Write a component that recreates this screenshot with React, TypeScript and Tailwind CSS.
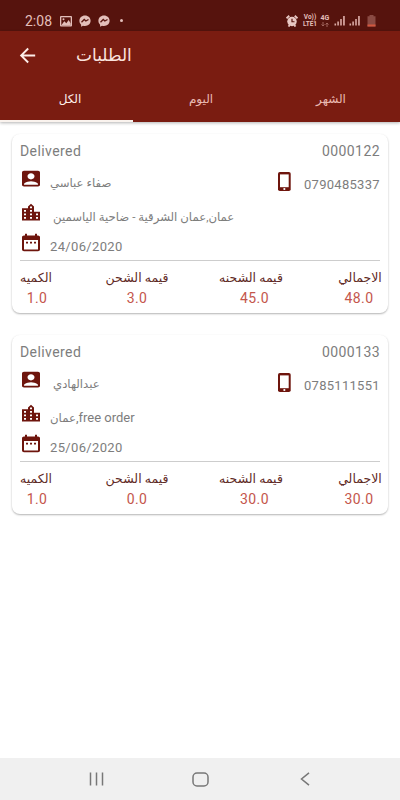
import { MdAccountBox, MdLocationCity, MdDateRange, MdArrowBack } from 'react-icons/md';

interface Order {
  id: string;
  status: string;
  name: string;
  nameClass: string;
  phone: string;
  address: string;
  addressNote?: string;
  addressClass: string;
  date: string;
  total: string;
  price: string;
  shipping: string;
  quantity: string;
}

const orders: Order[] = [
  {
    id: '0000122',
    status: 'Delivered',
    name: 'صفاء عباسي',
    nameClass: 'ml-[7px]',
    phone: '0790485337',
    address: 'عمان,عمان الشرقية - ضاحية الياسمين',
    addressClass: 'ml-[10px]',
    date: '24/06/2020',
    total: '48.0',
    price: '45.0',
    shipping: '3.0',
    quantity: '1.0',
  },
  {
    id: '0000133',
    status: 'Delivered',
    name: 'عبدالهادي',
    nameClass: 'ml-[10px]',
    phone: '0785111551',
    address: 'عمان',
    addressNote: ',free order',
    addressClass: 'ml-[7px]',
    date: '25/06/2020',
    total: '30.0',
    price: '30.0',
    shipping: '0.0',
    quantity: '1.0',
  },
];

function MessengerIcon() {
  return (
    <svg width="12" height="12" viewBox="0 0 24 24" className="shrink-0">
      <path
        fill="#e3bfba"
        d="M12 1C5.500 1 .8 5.600 .8 11.600c0 3.200 1.300 5.800 3.400 7.700V23.500l3.800-2.100c1.200.3 2.600.5 4 .5 6.500 0 11.200-4.600 11.200-10.300S18.500 1 12 1z"
      />
      <path d="M5 14.500l5.500-5.500 3.200 3 5.300-3" fill="none" stroke="#56130d" strokeWidth="2.600" />
    </svg>
  );
}

function PhoneIcon() {
  return (
    <svg width="13" height="19" viewBox="0 0 13 19" className="shrink-0">
      <rect width="12.700" height="19" rx="1.800" fill="#6e150d" />
      <rect x="2" y="2.400" width="8.700" height="12.800" fill="#fff" />
      <circle cx="6.350" cy="17" r="1.100" fill="#fff" />
    </svg>
  );
}

function Signal() {
  return (
    <svg width="12" height="11" viewBox="0 0 12 11" fill="#d9a9a3" className="shrink-0">
      <rect x="0.500" y="8.500" width="1.600" height="2" />
      <rect x="3.300" y="6.500" width="1.600" height="4" />
      <rect x="6.200" y="4" width="1.600" height="6.500" />
      <rect x="9.100" y="1" width="1.700" height="9.500" />
    </svg>
  );
}

function StatusBar() {
  return (
    <div className="flex h-[31px] items-start bg-[#56130d] pl-[25px] text-[#e3bfba]">
      <span className="mt-[13px] w-[34px] text-[14px] leading-[17px] whitespace-nowrap">2:08</span>
      <svg width="12" height="11" viewBox="0 0 12 11" className="mt-[16px] mr-[7px] ml-[1px]">
        <rect width="12" height="10.500" rx="1" fill="#e3bfba" />
        <rect x="1.300" y="1.300" width="9.400" height="7.900" fill="#56130d" />
        <path d="M1.300 9.200L4.300 5.200l2 2L8.700 4l2 3.500v1.700z" fill="#e3bfba" />
        <circle cx="3.500" cy="3.200" r="1" fill="#e3bfba" />
      </svg>
      <div className="mt-[15px] flex gap-[7px]">
        <MessengerIcon />
        <MessengerIcon />
      </div>
      <span className="mt-[19px] ml-[10px] size-[3px] rounded-full bg-[#e3bfba]" />
      <div className="mt-[15px] mr-[24px] ml-auto flex items-start">
        <svg width="12" height="12" viewBox="0 0 24 24" className="mr-[4px]">
          <circle cx="12" cy="13" r="9.500" fill="#e8c8c3" />
          <path d="M1 6.500L6.500 1.500M23 6.500l-5.500-5M5 23l2.500-3M19 23l-2.500-3" stroke="#e8c8c3" strokeWidth="3.800" />
          <path d="M12 7.500v6h5" fill="none" stroke="#56130d" strokeWidth="2.400" />
        </svg>
        <div className="-mt-px w-[16px] text-center text-[6.500px] leading-[7px] font-bold whitespace-nowrap">
          <div>Vo))</div>
          <div className="-mx-1">LTE1</div>
        </div>
        <div className="ml-[2px] w-[10px] text-center text-[7px] leading-[7px] font-bold">
          <div>4G</div>
          <svg width="8" height="5" viewBox="0 0 8 5" className="mx-auto" fill="none" stroke="#a0645c">
            <path d="M2 0v4M.5 2.500L2 4l1.500-1.500M6 5V1M4.500 2.500L6 1l1.500 1.500" />
          </svg>
        </div>
        <div className="ml-[4px] flex gap-[3px]">
          <Signal />
          <Signal />
        </div>
        <svg width="9" height="12" viewBox="0 0 9 12" className="ml-[6px]">
          <path d="M2.500 0h4v1.300H8.500V11.500H.5V1.300h2z" fill="#8a4a43" />
          <rect x="0.500" y="9.500" width="8" height="2" fill="#d2573f" />
        </svg>
      </div>
    </div>
  );
}

function Header() {
  return (
    <header className="h-[91px] bg-[#7a1c11] shadow-[0_1px_3px_rgba(0,0,0,0.3)]">
      <div className="flex h-[49px] items-center pl-[16px]">
        <MdArrowBack className="size-[23px] text-[#fdeeea]" />
        <h1 dir="rtl" className="-mt-[2px] ml-[37px] text-[17px] leading-[24px] whitespace-nowrap text-[#fae3de]">
          الطلبات
        </h1>
      </div>
      <div className="grid h-[42px] grid-cols-[133px_136px_131px] text-center text-[12px] text-[#e9b9b2]">
        <div className="border-b-[2.500px] border-[#faf3ee] pt-[9px] pl-[7px] leading-[20px] text-[#fdeeea]">الكل</div>
        <div className="pt-[9px] leading-[20px]">اليوم</div>
        <div className="pt-[9px] pr-[7px] leading-[20px]">الشهر</div>
      </div>
    </header>
  );
}

function Amount({ label, value, className }: { label: string; value: string; className: string }) {
  return (
    <div className={`flex shrink-0 flex-col items-center whitespace-nowrap ${className}`}>
      <span className="text-[12.500px] leading-[20px] text-[#5f2a25]">{label}</span>
      <span className="text-[14px] leading-[20px] tracking-[0.4px] text-[#c4564c]">{value}</span>
    </div>
  );
}

function OrderCard({ order }: { order: Order }) {
  return (
    <div className="h-[179px] w-[376px] rounded-[8px] bg-white px-[8px] text-[13px] text-[#7d7d7d] shadow-[0_1px_2px_rgba(0,0,0,0.3)]">
      <div className="flex h-[34px] items-center justify-between text-[14px] tracking-[0.420px]">
        <span>{order.status}</span>
        <span>{order.id}</span>
      </div>
      <div className="flex h-[30px] items-start">
        <MdAccountBox preserveAspectRatio="none" className="-ml-px h-[21px] w-[24px] text-[#6e150d]" />
        <span dir="rtl" className={`mt-[5px] text-[11.700px] leading-[20px] whitespace-nowrap ${order.nameClass}`}>
          {order.name}
        </span>
        <div className="mt-[4px] ml-auto">
          <PhoneIcon />
        </div>
        <span className="mt-[7px] ml-[13px] w-[76px] text-[13px] leading-[20px] tracking-[0.280px]">{order.phone}</span>
      </div>
      <div className="flex h-[34px] items-start pt-[4px]">
        <MdLocationCity preserveAspectRatio="none" className="-ml-px h-[21px] w-[24px] text-[#6e150d]" />
        <span className={`mt-[5px] text-[11.700px] leading-[20px] whitespace-nowrap ${order.addressClass}`}>
          <bdi>{order.address}</bdi>
          {order.addressNote && <span className="text-[13px]">{order.addressNote}</span>}
        </span>
      </div>
      <div className="flex h-[29px] items-start border-b border-[#cdcdcd]">
        <MdDateRange preserveAspectRatio="none" className="-ml-px h-[21px] w-[24px] text-[#6e150d]" />
        <span className="mt-[5px] ml-[7px] text-[13px] leading-[20px] tracking-[0.350px]">{order.date}</span>
      </div>
      <div className="flex pt-[7px]">
        <Amount label="الكميه" value={order.quantity} className="w-[32px] [&>span:last-child]:ml-[2px]" />
        <Amount label="قيمه الشحن" value={order.shipping} className="ml-[53px] w-[64px]" />
        <Amount label="قيمه الشحنه" value={order.price} className="ml-[49px] w-[66px] [&>span:last-child]:ml-[7px]" />
        <Amount label="الاجمالي" value={order.total} className="ml-[54px] w-[44px] [&>span:last-child]:mr-[2px]" />
      </div>
    </div>
  );
}

function NavBar() {
  return (
    <nav className="flex h-[42px] items-center bg-[#f0f0f0] pl-[89px]">
      <svg width="15" height="14" viewBox="0 0 15 14" stroke="#777" strokeWidth="1.500">
        <path d="M1.500 .5v13M7.500 .5v13M13.500 .5v13" />
      </svg>
      <svg width="17" height="15" viewBox="0 0 17 15" fill="none" stroke="#777" strokeWidth="1.500" className="ml-[88px]">
        <rect x="1" y="1" width="15" height="13" rx="4" />
      </svg>
      <svg width="10" height="14" viewBox="0 0 10 14" fill="none" stroke="#777" strokeWidth="1.500" className="ml-[91px]">
        <path d="M9 .8L1.500 7 9 13.200" />
      </svg>
    </nav>
  );
}

export default function App() {
  return (
    <div className="flex h-[800px] w-[400px] flex-col overflow-hidden bg-white font-[Roboto,'DejaVu_Sans',sans-serif]">
      <StatusBar />
      <Header />
      <main className="flex flex-1 flex-col gap-[22px] px-[12px] pt-[12px]">
        {orders.map((order) => (
          <OrderCard key={order.id} order={order} />
        ))}
      </main>
      <NavBar />
    </div>
  );
}
